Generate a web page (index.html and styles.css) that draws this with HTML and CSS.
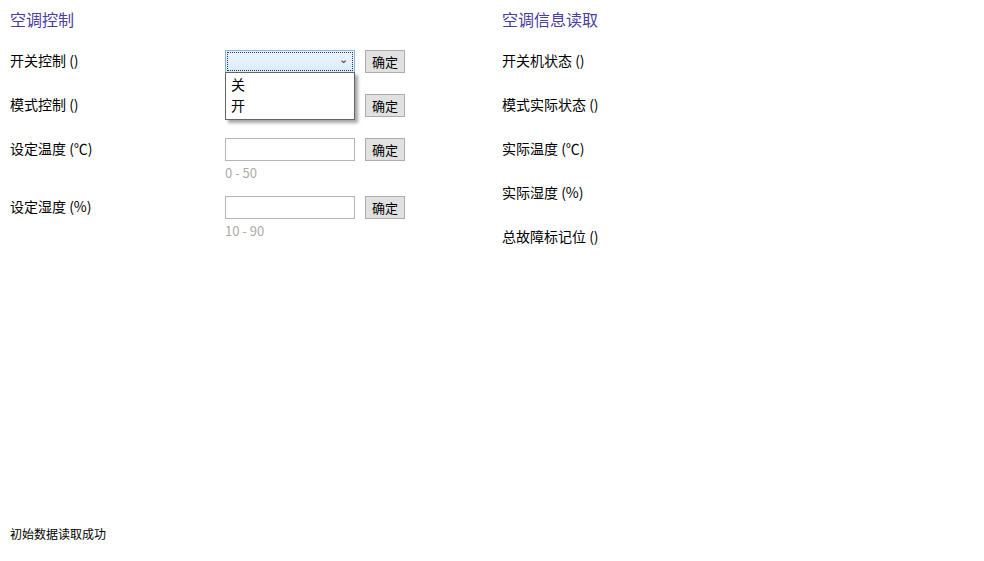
FILE: index.html
```html
<!DOCTYPE html>
<html lang="zh-CN">
<head>
  <meta charset="UTF-8" />
  <title>空调</title>
  <link rel="stylesheet" href="styles.css">
</head>
<body>
  <div class="page">
    <div class="panel panel-control">
      <div class="title">空调控制</div>

      <div class="row">
        <div class="label">开关控制 ()</div>
        <div class="field">
          <div class="select focused">
            <span class="chevron">&#8964;</span>
            <div class="options">
              <div class="option">关</div>
              <div class="option">开</div>
            </div>
          </div>
        </div>
        <button class="btn">确定</button>
      </div>

      <div class="row">
        <div class="label">模式控制 ()</div>
        <div class="field">
          <div class="select"><span class="chevron">&#8964;</span></div>
        </div>
        <button class="btn">确定</button>
      </div>

      <div class="row">
        <div class="label">设定温度 (℃)</div>
        <div class="field"><input class="input" type="text"></div>
        <button class="btn">确定</button>
      </div>
      <div class="hint">0 - 50</div>

      <div class="row">
        <div class="label">设定湿度 (%)</div>
        <div class="field"><input class="input" type="text"></div>
        <button class="btn">确定</button>
      </div>
      <div class="hint">10 - 90</div>
    </div>

    <div class="panel panel-read">
      <div class="title">空调信息读取</div>
      <div class="row"><div class="label">开关机状态 ()</div></div>
      <div class="row"><div class="label">模式实际状态 ()</div></div>
      <div class="row"><div class="label">实际温度 (℃)</div></div>
      <div class="row"><div class="label">实际湿度 (%)</div></div>
      <div class="row"><div class="label">总故障标记位 ()</div></div>
    </div>
  </div>

  <div class="status">初始数据读取成功</div>
</body>
</html>
```

FILE: styles.css
```css
body {
  margin: 0;
  padding: 0;
  font-family: "Noto Sans CJK SC", "Noto Sans", sans-serif;
  color: #000;
  background: #fff;
  height: 561px;
  position: relative;
  overflow: hidden;
}

.page {
  display: flex;
  padding: 10px 10px 0;
}

.panel-control {
  width: 492px;
}

.title {
  font-size: 16px;
  line-height: 19px;
  height: 19px;
  color: #4b3c9e;
  margin-bottom: 21px;
}

.row {
  display: flex;
  align-items: center;
  height: 23px;
  margin-bottom: 21px;
}

.label {
  align-self: flex-start;
  font-size: 14px;
  width: 215px;
  line-height: 21px;
  white-space: nowrap;
}

.field {
  width: 130px;
  margin-right: 10px;
}

.select {
  position: relative;
  box-sizing: border-box;
  height: 23px;
  width: 130px;
  border: 1px solid #acacac;
  background: linear-gradient(#f0f0f0, #e5e5e5);
}

.select.focused {
  border-color: #7eb4ea;
  background: linear-gradient(#ecf4fc, #dcecfc);
}

.select.focused::before {
  content: "";
  position: absolute;
  left: 1px; top: 1px; right: 1px; bottom: 1px;
  border: 1px dotted #333;
}

.chevron {
  position: absolute;
  right: 6px;
  top: 0px;
  font-size: 11px;
  line-height: 14px;
  color: #333;
}

.options {
  position: absolute;
  top: 21px;
  left: -1px;
  width: 130px;
  box-sizing: border-box;
  border: 1px solid #646464;
  background: #fff;
  box-shadow: 3px 3px 3px rgba(0, 0, 0, 0.35);
  padding: 1px 0 3px;
  z-index: 5;
}

.option {
  font-size: 14px;
  line-height: 21px;
  padding-left: 5px;
}

.input {
  display: block;
  box-sizing: border-box;
  width: 130px;
  height: 23px;
  border: 1px solid #b4b4b4;
  padding: 0 3px;
  margin: 0;
  font-family: inherit;
}

.btn {
  box-sizing: border-box;
  height: 23px;
  width: 40px;
  padding: 0 0 1px;
  font-family: inherit;
  font-size: 13px;
  background: #e1e1e1;
  border: 1px solid #adadad;
  color: #000;
}

.hint {
  margin: -18px 0 14px 215px;
  font-size: 13px;
  line-height: 18px;
  color: #aaa;
}

.status {
  position: absolute;
  left: 10px;
  top: 525px;
  font-size: 12px;
  line-height: 18px;
}
```
